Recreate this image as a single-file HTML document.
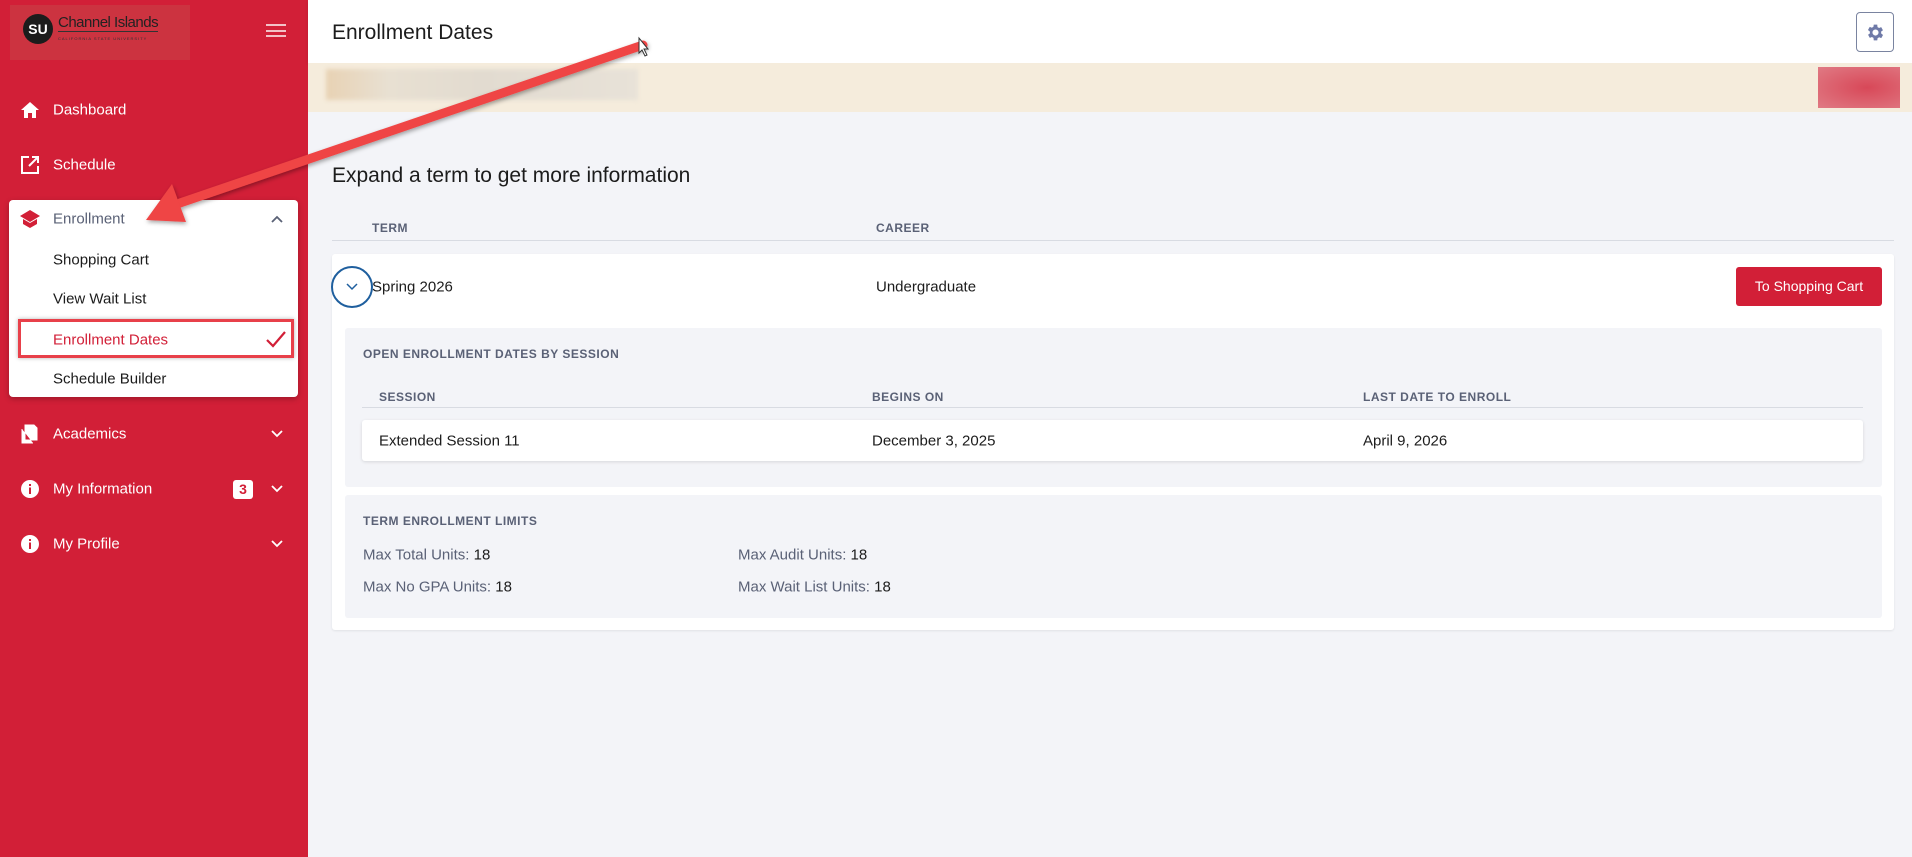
<!DOCTYPE html>
<html><head><meta charset="utf-8"><style>
*{box-sizing:border-box;margin:0;padding:0}
body{width:1912px;height:857px;overflow:hidden;background:#f3f4f8;font-family:"Liberation Sans",sans-serif;position:relative;color:#1c1c1c}
.abs{position:absolute}
#side{left:0;top:0;width:308px;height:857px;background:#d21f37}
.logo{left:10px;top:5px;width:180px;height:55px;background:#cc3340}
.nav{position:absolute;left:53px;font-size:15px;color:#fff;transform:translateY(-50%)}
.ic{position:absolute;left:20px;transform:translateY(-50%)}
.card{left:9px;top:200px;width:289px;height:197px;background:#fff;border-radius:4px;box-shadow:0 2px 6px rgba(0,0,0,.25)}
.sub{position:absolute;left:53px;font-size:15px;color:#1c1c1c;transform:translateY(-50%)}
.chev{position:absolute;transform:translateY(-50%)}
.hdr{left:308px;top:0;width:1604px;height:63px;background:#fff;box-shadow:0 1px 3px rgba(0,0,0,.12)}
.th{font-size:12px;color:#5a6176;font-weight:bold;letter-spacing:.5px;transform:translateY(-50%)}
.txt{font-size:15px;transform:translateY(-50%)}
.lbl{color:#5a6176}
</style></head><body>
<div id="side" class="abs">
 <div class="abs logo">
  <div class="abs" style="left:13px;top:9px;width:30px;height:30px;border-radius:50%;background:#1c1c1c;color:#fff;font-size:14px;line-height:30px;text-align:center;font-weight:bold">SU</div>
  <div class="abs" style="left:48px;top:9px;font-size:15px;color:#222;border-bottom:1px solid #333;letter-spacing:-.5px">Channel Islands</div>
  <div class="abs" style="left:48px;top:31px;font-size:4px;color:#333;letter-spacing:1px">CALIFORNIA STATE UNIVERSITY</div>
 </div>
 <div class="abs" style="left:266px;top:24px;width:20px;height:13px;border-top:2px solid #f3c1c7;border-bottom:2px solid #f3c1c7"><div style="margin-top:3.5px;height:2px;background:#f3c1c7"></div></div>
 <svg class="ic" style="top:110px" width="20" height="18" viewBox="0 0 20 18"><path d="M10 1L1 9h3v8h4v-5h4v5h4V9h3z" fill="#fff"/></svg>
 <div class="nav" style="top:110px">Dashboard</div>
 <svg class="ic" style="top:165px" width="20" height="20" viewBox="0 0 20 20"><path d="M9 2H2v16h16v-7M12 2h6v6M18 2l-9 9" fill="none" stroke="#fff" stroke-width="2"/></svg>
 <div class="nav" style="top:165px">Schedule</div>
 <div class="abs card">
  <svg class="ic" style="left:10px;top:19px" width="22" height="20" viewBox="0 0 22 20"><path d="M11 1L1 7l10 6 10-6z M4 10v5l7 4 7-4v-5l-7 4z" fill="#d21f37"/></svg>
  <div class="sub" style="left:44px;top:19px;color:#5a6176">Enrollment</div>
  <svg class="chev" style="left:262px;top:19px" width="12" height="8" viewBox="0 0 12 8"><path d="M1 7l5-5 5 5" fill="none" stroke="#5a6176" stroke-width="1.8"/></svg>
  <div class="sub" style="left:44px;top:60px">Shopping Cart</div>
  <div class="sub" style="left:44px;top:99px">View Wait List</div>
  <div class="abs" style="left:9px;top:119px;width:276px;height:39px;border:3px solid #e8404a;box-shadow:0 0 4px rgba(0,0,0,.3)"></div>
  <div class="sub" style="left:44px;top:140px;color:#d21f37">Enrollment Dates</div>
  <svg class="abs" style="left:257px;top:131px" width="20" height="17" viewBox="0 0 20 17"><path d="M1 9l6 6L19 1" fill="none" stroke="#d21f37" stroke-width="2.2"/></svg>
  <div class="sub" style="left:44px;top:179px">Schedule Builder</div>
 </div>
 <svg class="ic" style="top:434px" width="18" height="20" viewBox="0 0 18 20"><path d="M5 1h9l3 3v12H5z M2 5v14h11" fill="#fff" stroke="#fff" stroke-width="1"/></svg>
 <div class="nav" style="top:434px">Academics</div>
 <svg class="abs" style="left:271px;top:430px" width="12" height="8" viewBox="0 0 12 8"><path d="M1 1l5 5 5-5" fill="none" stroke="#fff" stroke-width="1.8"/></svg>
 <svg class="ic" style="top:489px" width="20" height="20" viewBox="0 0 20 20"><circle cx="10" cy="10" r="9" fill="#fff"/><rect x="9" y="8.5" width="2" height="6.5" fill="#d21f37"/><rect x="9" y="5" width="2" height="2" fill="#d21f37"/></svg>
 <div class="nav" style="top:489px">My Information</div>
 <div class="abs" style="left:233px;top:480px;width:20px;height:19px;background:#fff;border-radius:3px;color:#d21f37;font-weight:bold;font-size:14px;text-align:center;line-height:19px">3</div>
 <svg class="abs" style="left:271px;top:485px" width="12" height="8" viewBox="0 0 12 8"><path d="M1 1l5 5 5-5" fill="none" stroke="#fff" stroke-width="1.8"/></svg>
 <svg class="ic" style="top:544px" width="20" height="20" viewBox="0 0 20 20"><circle cx="10" cy="10" r="9" fill="#fff"/><rect x="9" y="8.5" width="2" height="6.5" fill="#d21f37"/><rect x="9" y="5" width="2" height="2" fill="#d21f37"/></svg>
 <div class="nav" style="top:544px">My Profile</div>
 <svg class="abs" style="left:271px;top:540px" width="12" height="8" viewBox="0 0 12 8"><path d="M1 1l5 5 5-5" fill="none" stroke="#fff" stroke-width="1.8"/></svg>
</div>
<div class="abs hdr"></div>
<div class="abs" style="left:332px;top:33px;font-size:21px;transform:translateY(-50%)">Enrollment Dates</div>
<div class="abs" style="left:1856px;top:12px;width:38px;height:40px;border:1px solid #7a84a0;border-radius:4px;background:#fff">
 <svg class="abs" style="left:8px;top:9px" width="21" height="21" viewBox="0 0 24 24"><path fill="#6f7aa8" d="M19.4 13a7.5 7.5 0 000-2l2.1-1.6-2-3.5-2.5 1a7 7 0 00-1.7-1L15 3h-4l-.4 2.6a7 7 0 00-1.7 1l-2.5-1-2 3.5L6.6 11a7.5 7.5 0 000 2l-2.1 1.6 2 3.5 2.5-1a7 7 0 001.7 1L11 21h4l.4-2.6a7 7 0 001.7-1l2.5 1 2-3.5zM13 15.5a3.5 3.5 0 110-7 3.5 3.5 0 010 7z" transform="translate(-1 0)"/></svg>
</div>
<div class="abs" style="left:308px;top:63px;width:1604px;height:49px;background:#f5ecdc"></div>
<div class="abs" style="left:326px;top:69px;width:312px;height:31px;background:linear-gradient(90deg,#e8d2b4,#e8e0d2 20%,#e2dbd0 50%,#e8e2d8);filter:blur(2px)"></div>
<div class="abs" style="left:1818px;top:67px;width:82px;height:41px;background:radial-gradient(ellipse at 60% 50%,#d84858,#e07a84);"></div>
<div class="abs" style="left:332px;top:176px;font-size:21px;transform:translateY(-50%)">Expand a term to get more information</div>
<div class="abs th" style="left:372px;top:228px">TERM</div>
<div class="abs th" style="left:876px;top:228px">CAREER</div>
<div class="abs" style="left:332px;top:240px;width:1562px;height:1px;background:#d8dbe2"></div>
<div class="abs" style="left:332px;top:254px;width:1562px;height:376px;background:#fff;border-radius:3px;box-shadow:0 1px 2px rgba(0,0,0,.08)"></div>
<div class="abs" style="left:331px;top:266px;width:42px;height:42px;border:2px solid #1f5f9e;border-radius:50%"></div>
<svg class="abs" style="left:346px;top:283px" width="12" height="8" viewBox="0 0 12 8"><path d="M1 1l5 5 5-5" fill="none" stroke="#1f5f9e" stroke-width="1.5"/></svg>
<div class="abs txt" style="left:372px;top:287px">Spring 2026</div>
<div class="abs txt" style="left:876px;top:287px">Undergraduate</div>
<div class="abs" style="left:1736px;top:267px;width:146px;height:39px;background:#d21f37;border-radius:3px;color:#fff;font-size:14px;text-align:center;line-height:39px">To Shopping Cart</div>
<div class="abs" style="left:345px;top:328px;width:1537px;height:159px;background:#f3f4f8;border-radius:3px"></div>
<div class="abs th" style="left:363px;top:354px">OPEN ENROLLMENT DATES BY SESSION</div>
<div class="abs th" style="left:379px;top:397px">SESSION</div>
<div class="abs th" style="left:872px;top:397px">BEGINS ON</div>
<div class="abs th" style="left:1363px;top:397px">LAST DATE TO ENROLL</div>
<div class="abs" style="left:362px;top:407px;width:1501px;height:1px;background:#d8dbe2"></div>
<div class="abs" style="left:362px;top:420px;width:1501px;height:41px;background:#fff;border-radius:3px;box-shadow:0 1px 3px rgba(0,0,0,.12)"></div>
<div class="abs txt" style="left:379px;top:441px">Extended Session 11</div>
<div class="abs txt" style="left:872px;top:441px">December 3, 2025</div>
<div class="abs txt" style="left:1363px;top:441px">April 9, 2026</div>
<div class="abs" style="left:345px;top:495px;width:1537px;height:123px;background:#f3f4f8;border-radius:3px"></div>
<div class="abs th" style="left:363px;top:521px">TERM ENROLLMENT LIMITS</div>
<div class="abs txt" style="left:363px;top:555px"><span class="lbl">Max Total Units:</span> 18</div>
<div class="abs txt" style="left:738px;top:555px"><span class="lbl">Max Audit Units:</span> 18</div>
<div class="abs txt" style="left:363px;top:587px"><span class="lbl">Max No GPA Units:</span> 18</div>
<div class="abs txt" style="left:738px;top:587px"><span class="lbl">Max Wait List Units:</span> 18</div>
<svg class="abs" style="left:0;top:0" width="1912" height="857">
 <defs><filter id="sh"><feDropShadow dx="1" dy="2" stdDeviation="2" flood-opacity=".35"/></filter></defs>
 <g filter="url(#sh)">
  <line x1="643" y1="45" x2="180" y2="203" stroke="#ef4444" stroke-width="9" stroke-linecap="round"/>
  <polygon points="146,220 172,184 186,222" fill="#ef4444"/>
 </g>
 <path d="M639 38v15l3-3 3 6 2-1-3-6h4z" fill="#fff" stroke="#333" stroke-width="1"/>
</svg>
</body></html>
